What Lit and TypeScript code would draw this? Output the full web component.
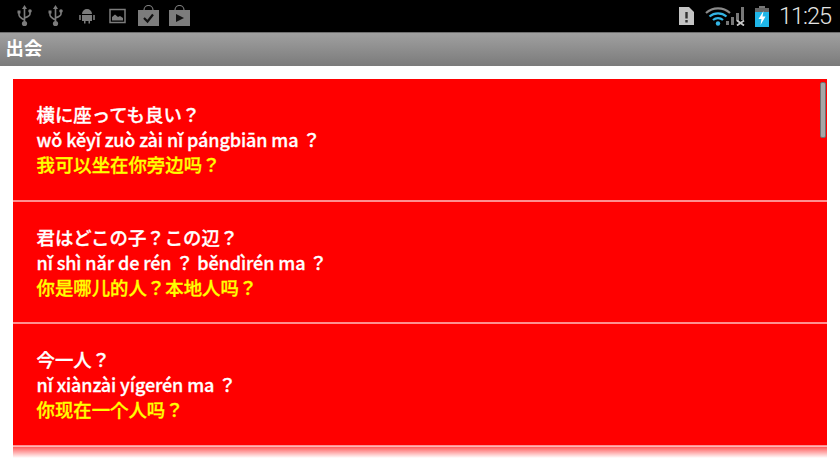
import { LitElement, html, css, svg } from 'lit';
import { customElement } from 'lit/decorators.js';

const phrases = [
  { ja: '横に座っても良い？', py: 'wǒ kěyǐ zuò zài nǐ pángbiān ma ？', zh: '我可以坐在你旁边吗？' },
  { ja: '君はどこの子？この辺？', py: 'nǐ shì nǎr de rén ？ běndìrén ma ？', zh: '你是哪儿的人？本地人吗？' },
  { ja: '今一人？', py: 'nǐ xiànzài yígerén ma ？', zh: '你现在一个人吗？' },
  { ja: '', py: '', zh: '' },
];

const usb = svg`<path d="M7.500 3 V19 M2 8 V10 Q2 12 7.500 15 M13 7 V9 Q13 11 7.500 13" fill="none" stroke="#7c7c7c" stroke-width="1.600"/><path d="M7.500 0 L10 4 H5 Z M0.500 5.500 H3.500 V8.500 H0.500 Z" fill="#7c7c7c"/><circle cx="13" cy="6" r="1.800" fill="#7c7c7c"/><circle cx="7.500" cy="18.500" r="2.600" fill="#7c7c7c"/>`;

@customElement('app-root')
export class AppRoot extends LitElement {
  static styles = css`
    :host {
      display: block;
      width: 840px;
      height: 472px;
      overflow: hidden;
      background: #fff;
      font-family: 'Noto Sans CJK JP', 'Noto Sans', sans-serif;
    }

    .status {
      display: flex;
      align-items: center;
      height: 32px;
      background: #000;
      padding: 0 9px 0 9px;
    }

    .notifications {
      display: grid;
      grid-template-columns: repeat(6, 31px);
      justify-items: center;
      align-items: center;
    }

    .system {
      display: flex;
      align-items: center;
      margin-left: auto;
    }

    .status svg {
      display: block;
    }

    .wifi {
      margin-left: 11px;
    }

    .battery {
      margin-left: 9px;
    }

    .clock {
      font-family: 'Roboto', sans-serif;
      font-size: 23.500px;
      font-weight: 300;
      color: #e4e4e4;
      margin-left: 10px;
      letter-spacing: -1px;
    }

    .action-bar {
      box-sizing: border-box;
      display: flex;
      align-items: center;
      height: 34px;
      padding: 0 5.500px 5px;
      background: linear-gradient(#a0a0a0, #7b7b7b);
      border-top: 1px solid #6e6e6e;
      color: #fff;
      font-size: 18.400px;
      font-weight: 700;
    }

    .content {
      position: relative;
      height: 379px;
      margin: 13px 13px 0;
      overflow: hidden;
      background: #f00;
    }

    .row {
      box-sizing: border-box;
      height: 122.500px;
      padding: 23px 24px 0 23.500px;
      border-bottom: 2px solid #ff8f8f;
      font-size: 18.400px;
      line-height: 25px;
      font-weight: 500;
      -webkit-text-stroke: 0.3px currentColor;
      color: #fff;
    }

    .row div {
      white-space: nowrap;
    }

    .py {
      font-size: 18px;
      letter-spacing: -0.100px;
    }

    .zh {
      color: #ff0;
    }

    .scrollbar {
      position: absolute;
      top: 3px;
      right: 1px;
      width: 6px;
      height: 56px;
      border-radius: 2px;
      background: #a6a6a6;
      border: 1px solid #707070;
      box-sizing: border-box;
    }

    .fade {
      position: absolute;
      left: 0;
      right: 0;
      bottom: 0;
      height: 12px;
      background: linear-gradient(rgba(255, 255, 255, 0.3), #fff);
    }
  `;

  render() {
    return html`
      <div class="status">
        <div class="notifications">
          <svg width="15" height="22" viewBox="0 0 15 22">${usb}</svg>
          <svg width="15" height="22" viewBox="0 0 15 22">${usb}</svg>
          <svg width="16" height="16" viewBox="0 0 16 16">
            <path d="M3 6 A5 5 0 0 1 13 6 Z M3 7 H13 V13 H11 V15.500 H9.500 V13 H6.500 V15.500 H5 V13 H3 Z" fill="#7c7c7c" />
            <path d="M1 7 V12 M15 7 V12" stroke="#7c7c7c" stroke-width="1.600" />
          </svg>
          <svg width="17" height="16" viewBox="0 0 17 16">
            <rect x="1" y="1.500" width="15" height="13" fill="none" stroke="#7c7c7c" stroke-width="1.500" />
            <path d="M3 12.500 V9 L6 6.500 L9 9 L11 8 L14 10 V12.500 Z" fill="#7c7c7c" />
          </svg>
          <svg width="21" height="22" viewBox="0 0 21 22">
            <path d="M6 7 V5 A4.500 4.500 0 0 1 15 5 V7" fill="none" stroke="#7c7c7c" stroke-width="1.200" />
            <rect x="0" y="5" width="21" height="16" fill="#7c7c7c" />
            <path d="M6 13 L9.500 16.500 L15 9.500" fill="none" stroke="#111" stroke-width="2.200" />
          </svg>
          <svg width="21" height="22" viewBox="0 0 21 22">
            <path d="M6 7 V5 A4.500 4.500 0 0 1 15 5 V7" fill="none" stroke="#7c7c7c" stroke-width="1.200" />
            <rect x="0" y="5" width="21" height="16" fill="#7c7c7c" />
            <path d="M7 9 L15 13 L7 17 Z" fill="#111" />
          </svg>
        </div>
        <div class="system">
          <svg width="15" height="18" viewBox="0 0 15 18">
            <path d="M0 0 H10 L15 5 V18 H0 Z" fill="#c4c4c4" />
            <path d="M6.300 5 H8.700 V11.500 H6.300 Z M6.300 13 H8.700 V15.500 H6.300 Z" fill="#333" />
          </svg>
          <svg class="wifi" width="41" height="20" viewBox="0 0 41 20">
            <path d="M1 7 A18 18 0 0 1 25 7" fill="none" stroke="#8a8a8a" stroke-width="2.200" />
            <path d="M4.500 10.500 A13 13 0 0 1 21.500 10.500" fill="none" stroke="#33b5e5" stroke-width="2.200" />
            <path d="M8 14 A7.500 7.500 0 0 1 18 14" fill="none" stroke="#33b5e5" stroke-width="2.200" />
            <circle cx="13" cy="17.500" r="2.200" fill="#33b5e5" />
            <rect x="21" y="15" width="3" height="4" fill="#777" />
            <rect x="26" y="11" width="3" height="8" fill="#777" />
            <rect x="31" y="7" width="3" height="8" fill="#777" />
            <rect x="36" y="1" width="3" height="13" fill="#777" />
            <path d="M32 14.500 L39 19.500 M39 14.500 L32 19.500" stroke="#c8c8c8" stroke-width="1.800" />
          </svg>
          <svg class="battery" width="14" height="21" viewBox="0 0 14 21">
            <rect x="4" y="0" width="6" height="2" fill="#777" />
            <rect x="0" y="2" width="14" height="4" fill="#666" />
            <rect x="0" y="6" width="14" height="15" fill="#1fb6e8" />
            <path d="M8.500 5 L3.500 13 H6.500 L5.500 19 L10.500 10.500 H7.500 Z" fill="#fff" />
          </svg>
          <span class="clock">11:25</span>
        </div>
      </div>
      <div class="action-bar">出会</div>
      <div class="content">
        ${phrases.map(
          (p) => html`
            <div class="row">
              <div>${p.ja}</div>
              <div class="py">${p.py}</div>
              <div class="zh">${p.zh}</div>
            </div>
          `
        )}
        <div class="scrollbar"></div>
        <div class="fade"></div>
      </div>
    `;
  }
}
